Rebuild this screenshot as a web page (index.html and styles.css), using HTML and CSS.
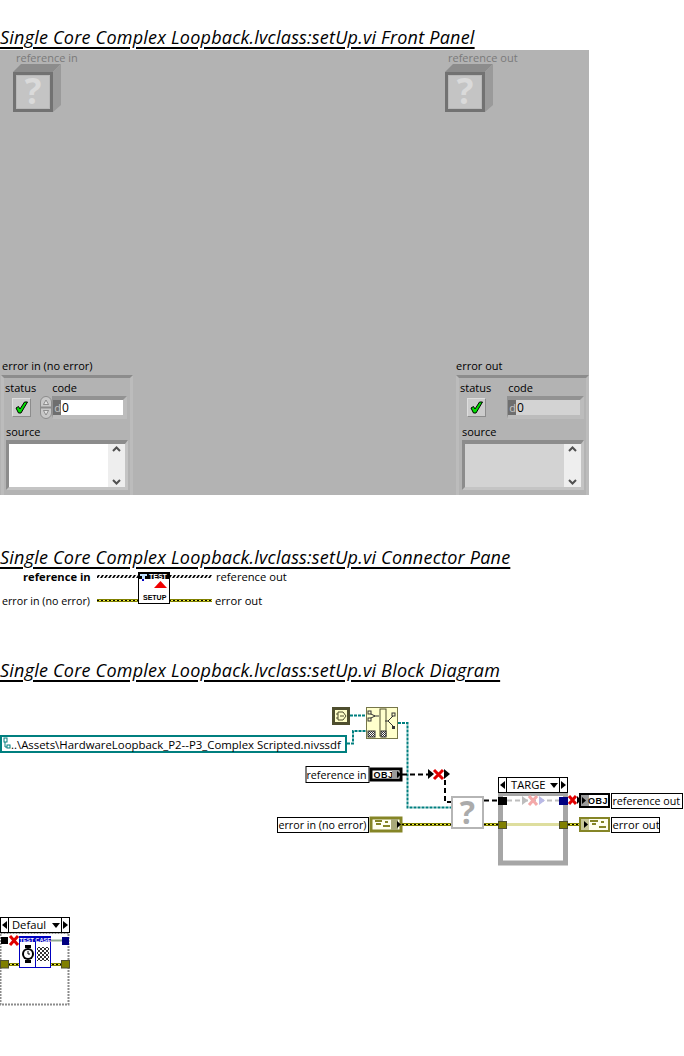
FILE: index.html
```html
<!DOCTYPE html>
<html>
<head>
    <title>setUp.vi</title>
    <link rel="stylesheet" href="styles.css">
</head>
<body>

<h2 class="title">Single Core Complex Loopback.lvclass:setUp.vi Front Panel</h2>

<div class="panel">
    <div class="refnum refnum-in">
        <div class="refnum-label">reference in</div>
        <svg width="48" height="52" viewBox="0 0 48 52">
            <polygon points="0,8 8,0 48,0 40,8" fill="#8c8c8c"/>
            <polygon points="40,8 48,0 48,41 40,48" fill="#9a9a9a"/>
            <rect x="0" y="8" width="40" height="40" fill="#727272"/>
            <rect x="3" y="11" width="34" height="34" fill="#b8b8b8"/>
            <rect x="4" y="12" width="32" height="32" fill="#c4c4c4"/>
            <text class="refnum-q" x="20" y="40">?</text>
        </svg>
    </div>
    <div class="refnum refnum-out">
        <div class="refnum-label">reference out</div>
        <svg width="48" height="52" viewBox="0 0 48 52">
            <polygon points="0,8 8,0 48,0 40,8" fill="#8c8c8c"/>
            <polygon points="40,8 48,0 48,41 40,48" fill="#9a9a9a"/>
            <rect x="0" y="8" width="40" height="40" fill="#727272"/>
            <rect x="3" y="11" width="34" height="34" fill="#b8b8b8"/>
            <rect x="4" y="12" width="32" height="32" fill="#c4c4c4"/>
            <text class="refnum-q" x="20" y="40">?</text>
        </svg>
    </div>

    <div class="cluster cluster-in">
        <div class="cluster-label">error in (no error)</div>
        <div class="cluster-box">
            <div class="field-labels">
                <span class="lbl-status">status</span>
                <span class="lbl-code">code</span>
            </div>
            <div class="field-row">
                <div class="check">
                    <svg width="13" height="13" viewBox="0 0 13 13"><path d="M1 7 L3.5 12 L6 12 L12.5 1 L9.5 1 L5 8 L3.5 5.5 Z" fill="#00e000" stroke="#000" stroke-width="1"/></svg>
                </div>
                <svg class="spinner" width="12" height="23" viewBox="0 0 12 23">
                    <rect x="0.5" y="0.5" width="11" height="22" rx="5.5" fill="#c8c8c8" stroke="#8c8c8c"/>
                    <rect x="1" y="10.5" width="10" height="2" fill="#8c8c8c"/>
                    <path d="M6 4 L3.5 8.5 H8.5 Z" fill="#e4e4e4" stroke="#6e6e6e" stroke-width="0.7"/>
                    <path d="M6 19 L3.5 14.5 H8.5 Z" fill="#e4e4e4" stroke="#6e6e6e" stroke-width="0.7"/>
                </svg>
                <div class="numeric"><span class="radix">d</span><span class="value">0</span></div>
            </div>
            <div class="lbl-source">source</div>
            <div class="textbox">
                <div class="text-area"></div>
                <div class="scroll">
                    <svg width="17" height="11" viewBox="0 0 17 11"><path d="M5 7 L8.5 3.5 L12 7" fill="none" stroke="#505050" stroke-width="2"/></svg>
                    <svg width="17" height="11" viewBox="0 0 17 11"><path d="M5 4 L8.5 7.5 L12 4" fill="none" stroke="#505050" stroke-width="2"/></svg>
                </div>
            </div>
        </div>
    </div>

    <div class="cluster cluster-out">
        <div class="cluster-label">error out</div>
        <div class="cluster-box">
            <div class="field-labels">
                <span class="lbl-status">status</span>
                <span class="lbl-code">code</span>
            </div>
            <div class="field-row">
                <div class="check">
                    <svg width="13" height="13" viewBox="0 0 13 13"><path d="M1 7 L3.5 12 L6 12 L12.5 1 L9.5 1 L5 8 L3.5 5.5 Z" fill="#00e000" stroke="#000" stroke-width="1"/></svg>
                </div>
                <div class="numeric"><span class="radix">d</span><span class="value">0</span></div>
            </div>
            <div class="lbl-source">source</div>
            <div class="textbox">
                <div class="text-area"></div>
                <div class="scroll">
                    <svg width="17" height="11" viewBox="0 0 17 11"><path d="M5 7 L8.5 3.5 L12 7" fill="none" stroke="#505050" stroke-width="2"/></svg>
                    <svg width="17" height="11" viewBox="0 0 17 11"><path d="M5 4 L8.5 7.5 L12 4" fill="none" stroke="#505050" stroke-width="2"/></svg>
                </div>
            </div>
        </div>
    </div>
</div>

<h2 class="title title-connector">Single Core Complex Loopback.lvclass:setUp.vi Connector Pane</h2>

<svg class="connector" width="300" height="40" viewBox="0 570 300 40">
    <defs>
        <pattern id="hatch" width="4" height="3" patternUnits="userSpaceOnUse" y="575">
            <rect width="4" height="3" fill="#fff"/>
            <path d="M0 3 L2 0 H4 L2 3 Z" fill="#000"/>
        </pattern>
    </defs>
    <text class="vi-text bold" x="23" y="581">reference in</text>
    <text class="vi-text" x="216" y="581">reference out</text>
    <text class="vi-text fit" x="2" y="605">error in (no error)</text>
    <text class="vi-text" x="215" y="605">error out</text>
    <rect x="97" y="575" width="115" height="3" fill="url(#hatch)"/>
    <line class="wire-err" x1="97" y1="600.5" x2="212" y2="600.5"/>
    <line class="wire-err-mid" x1="97" y1="600.5" x2="212" y2="600.5"/>
    <line class="wire-err-in" x1="97" y1="600.5" x2="212" y2="600.5"/>
    <rect x="138.5" y="572.5" width="31" height="31" fill="#fff" stroke="#000"/>
    <rect x="138" y="572" width="32" height="7" fill="#000"/>
    <text class="tiny-white" x="149" y="578.5">TEST</text>
    <rect x="140" y="574" width="7" height="2" fill="#bfe0ff"/>
    <rect x="142" y="576" width="3" height="3" fill="#bfe0ff"/>
    <rect x="142" y="579" width="2" height="2" fill="#0000c0"/>
    <polygon points="154,588 167,588 160.5,581" fill="#f00000"/>
    <text class="tiny-black" x="143" y="600">SETUP</text>
</svg>

<h2 class="title title-diagram">Single Core Complex Loopback.lvclass:setUp.vi Block Diagram</h2>

<svg class="diagram" width="684" height="330" viewBox="0 683 684 330">
    <defs>
        <pattern id="checker" width="2" height="2" patternUnits="userSpaceOnUse">
            <rect width="2" height="2" fill="#fff"/>
            <rect width="1" height="1" fill="#333"/>
            <rect x="1" y="1" width="1" height="1" fill="#333"/>
        </pattern>
        <pattern id="flag" width="4" height="4" patternUnits="userSpaceOnUse">
            <rect width="4" height="4" fill="#fff"/>
            <rect width="2" height="2" fill="#333"/>
            <rect x="2" y="2" width="2" height="2" fill="#333"/>
        </pattern>
    </defs>

    <!-- path wires -->
    <path class="wire-path" d="M350 715.5 H366"/>
    <path class="wire-path" d="M347 743.5 H353 V731 H366"/>
    <path class="wire-path" d="M398 723 H407.5 V807.5 H452"/>

    <!-- path constant -->
    <rect x="1" y="736" width="345" height="16" fill="#fff" stroke="#007f7f" stroke-width="2"/>
    <rect x="4" y="738" width="3" height="4" fill="none" stroke="#007f7f"/>
    <rect x="7" y="745" width="3" height="3" fill="none" stroke="#007f7f"/>
    <path d="M5 742 V747 H7" fill="none" stroke="#007f7f"/>
    <text class="vi-text path-text" x="11" y="749">..\Assets\HardwareLoopback_P2--P3_Complex Scripted.nivssdf</text>

    <!-- small constant -->
    <rect x="333.5" y="708.5" width="15" height="15" fill="#ffffc8" stroke="#4e4e2e" stroke-width="3"/>
    <path d="M338 712 H343 L346 716 L343 720 H338 Z" fill="none" stroke="#4e4e2e"/>
    <path d="M336 714 H338 M336 718 H338 M340 716 H344" stroke="#4e4e2e"/>

    <!-- path node -->
    <rect x="366.5" y="707.5" width="31" height="31" fill="#ffffcc" stroke="#76764a"/>
    <rect x="380" y="709" width="6" height="27" fill="#ffffcc" stroke="#4e4e2e"/>
    <path d="M369 713 L375 716 L369 719 M374 716 H379" fill="none" stroke="#333"/>
    <path d="M388 721 L393 716 M388 721 L393 726 M385 721 H388" fill="none" stroke="#333"/>
    <rect x="368" y="711" width="3" height="3" fill="#ffffcc" stroke="#333"/>
    <rect x="368" y="718" width="3" height="3" fill="#ffffcc" stroke="#333"/>
    <rect x="392" y="713" width="3" height="3" fill="#ffffcc" stroke="#333"/>
    <rect x="392" y="726" width="3" height="3" fill="#333"/>
    <rect x="368" y="731" width="7" height="6" fill="url(#checker)" stroke="#333"/>
    <rect x="381" y="731" width="5" height="6" fill="url(#checker)" stroke="#333"/>

    <!-- reference in -->
    <rect class="label-box" x="306" y="766.5" width="63" height="16"/>
    <text class="vi-text fit" x="306.5" y="779">reference in</text>
    <rect x="371" y="769" width="30" height="11" fill="#fff" stroke="#000" stroke-width="3"/>
    <text class="obj" x="373.5" y="778">OBJ</text>
    <rect x="392" y="770" width="7" height="9" fill="#9a9a9a"/>
    <polygon points="397,771 401,774.5 397,778" fill="#000"/>
    <path class="wire-ref-thick" d="M402 774.5 H428"/>
    <polygon points="428,769 434,774 428,779" fill="#000"/>
    <polygon points="444,769 450,774 444,779" fill="#000"/>
    <path class="x-mark" d="M434 770 L443 779 M443 770 L434 779"/>
    <path class="wire-ref-thick" d="M445 780 V802 H451"/>

    <!-- error in -->
    <rect class="label-box" x="277.5" y="817.5" width="91" height="15"/>
    <text class="vi-text fit" x="278.5" y="829">error in (no error)</text>
    <rect x="371" y="818" width="30" height="13" fill="#fffff0" stroke="#858526" stroke-width="3"/>
    <path d="M375 821 H382 M376 824 H381 M383 826 H390 M385 822 H388" stroke="#858526" stroke-width="2"/>
    <rect x="391" y="819" width="7" height="11" fill="#a8a87a"/>
    <polygon points="397,821 401,824.5 397,828" fill="#000"/>
    <line class="wire-err" x1="402" y1="824.5" x2="452" y2="824.5"/>
    <line class="wire-err-mid" x1="402" y1="824.5" x2="452" y2="824.5"/>
    <line class="wire-err-in" x1="402" y1="824.5" x2="452" y2="824.5"/>

    <!-- bad node -->
    <rect x="452" y="797" width="31" height="31" fill="#fff" stroke="#b5b5b5" stroke-width="2"/>
    <text class="node-q" x="467.5" y="824">?</text>

    <line class="wire-err" x1="484" y1="824.5" x2="498" y2="824.5"/>
    <line class="wire-err-mid" x1="484" y1="824.5" x2="498" y2="824.5"/>
    <line class="wire-err-in" x1="484" y1="824.5" x2="498" y2="824.5"/>
    <path class="wire-ref-thick" d="M484 800.5 H498"/>

    <!-- case structure -->
    <rect x="500.5" y="793.5" width="65" height="69.5" fill="#fff" stroke="#a6a6a6" stroke-width="5"/>
    <path class="wire-ref-faded" d="M507 800.5 H559"/>
    <polygon points="522,796 528,800.5 522,805" fill="#bdbdbd"/>
    <path d="M529 796 L537 805 M537 796 L529 805" stroke="#f4a9a9" stroke-width="3"/>
    <polygon points="539,796 545,800.5 539,805" fill="#b9b9e6"/>
    <line x1="507" y1="824.5" x2="559" y2="824.5" stroke="#dede9e" stroke-width="3"/>
    <rect x="498" y="797" width="9" height="8" fill="#000"/>
    <rect x="559" y="797" width="9" height="8" fill="#000080"/>
    <rect x="498.5" y="821.5" width="8" height="7" fill="#808000" stroke="#4e4e2e"/>
    <rect x="559.5" y="821.5" width="8" height="7" fill="#808000" stroke="#4e4e2e"/>
    <rect x="498.5" y="777.5" width="69" height="15" fill="#fff" stroke="#000"/>
    <path d="M506.5 778 V792 M559.5 778 V792" stroke="#000"/>
    <polygon points="505,781 505,789 500,785" fill="#000"/>
    <polygon points="561,781 561,789 566,785" fill="#000"/>
    <polygon points="550,783 558,783 554,788" fill="#000"/>
    <text class="vi-text" x="511" y="789">TARGE</text>

    <!-- outputs -->
    <path class="x-mark" d="M569 796 L576 804 M576 796 L569 804"/>
    <polygon points="577,796 581,800 577,804" fill="#000"/>
    <rect x="580" y="794" width="29" height="13" fill="#fff" stroke="#000" stroke-width="2"/>
    <rect x="581" y="795" width="8" height="11" fill="#9a9a9a"/>
    <polygon points="582,797 586,800.5 582,804" fill="#000"/>
    <text class="obj" x="588" y="804">OBJ</text>
    <rect class="label-box" x="611.5" y="793.5" width="71" height="15"/>
    <text class="vi-text fit" x="612.5" y="805">reference out</text>

    <line class="wire-err" x1="568" y1="824.5" x2="580" y2="824.5"/>
    <line class="wire-err-mid" x1="568" y1="824.5" x2="580" y2="824.5"/>
    <line class="wire-err-in" x1="568" y1="824.5" x2="580" y2="824.5"/>
    <rect x="580" y="818" width="29" height="13" fill="#fffff0" stroke="#858526" stroke-width="2"/>
    <rect x="581" y="819" width="8" height="11" fill="#c9c99a"/>
    <polygon points="584,821 588,824.5 584,828" fill="#000"/>
    <path d="M590 821 H598 M592 824 H596 M599 827 H606 M601 822 H604" stroke="#858526" stroke-width="2"/>
    <rect class="label-box" x="611.5" y="817.5" width="48" height="15"/>
    <text class="vi-text" x="612.5" y="829">error out</text>

    <!-- default case -->
    <rect class="case-dotted" x="0.5" y="933" width="68" height="71.5" fill="#fff"/>
    <line x1="51" y1="940.5" x2="62" y2="940.5" stroke="#8fa88f" stroke-width="2"/>
    <line class="wire-err" x1="8" y1="964.5" x2="62" y2="964.5"/>
    <line class="wire-err-mid" x1="8" y1="964.5" x2="62" y2="964.5"/>
    <line class="wire-err-in" x1="8" y1="964.5" x2="62" y2="964.5"/>
    <rect x="1" y="937" width="7" height="7" fill="#000"/>
    <rect x="62" y="937" width="7" height="8" fill="#000080"/>
    <rect x="0.5" y="960.5" width="8" height="7.5" fill="#808000" stroke="#4e4e2e"/>
    <rect x="61.5" y="960.5" width="8" height="7.5" fill="#808000" stroke="#4e4e2e"/>
    <rect x="19.5" y="936.5" width="31" height="31" fill="#fff" stroke="#0000c0"/>
    <rect x="19" y="936" width="32" height="6" fill="#0000c0"/>
    <text class="tiny-case" x="19.5" y="941.8">TEST CASE</text>
    <path class="x-mark" d="M10 936 L18 945 M18 936 L10 945"/>
    <circle cx="28" cy="954" r="6" fill="#000"/>
    <circle cx="28" cy="954" r="4" fill="#fff"/>
    <path d="M28 951 V954 H30" fill="none" stroke="#000"/>
    <rect x="25" y="945" width="6" height="3" fill="#000"/>
    <rect x="25" y="960" width="6" height="3" fill="#000"/>
    <line x1="35.5" y1="942" x2="35.5" y2="967" stroke="#0000c0"/>
    <rect x="37" y="947" width="12" height="14" fill="url(#flag)"/>
    <rect x="0.5" y="917.5" width="69" height="15" fill="#fff" stroke="#000"/>
    <path d="M8.5 918 V932 M61.5 918 V932" stroke="#000"/>
    <polygon points="7,921 7,929 2,925" fill="#000"/>
    <polygon points="63,921 63,929 68,925" fill="#000"/>
    <polygon points="52,923 60,923 56,928" fill="#000"/>
    <text class="vi-text" x="12" y="929">Defaul</text>
</svg>

</body>
</html>
```

FILE: styles.css
```css
body {
    margin: 0;
    padding-top: 26px;
    background-color: #fff;
    font-family: "Open Sans", "Noto Sans", sans-serif;
}
.title {
    margin: 0;
    height: 24px;
    font-size: 18px;
    line-height: 22px;
    font-weight: 400;
    font-style: italic;
    letter-spacing: 0.22px;
    color: #000;
    white-space: nowrap;
    text-decoration: underline;
    text-decoration-thickness: 2px;
    text-underline-offset: 3px;
}
.title-connector {
    margin-top: 51px;
}
.title-diagram {
    margin-top: 49px;
}
svg {
    display: block;
}

/* front panel */
.panel {
    position: relative;
    width: 589px;
    height: 445px;
    background-color: #b3b3b3;
    overflow: hidden;
    font-size: 11px;
}
.refnum {
    position: absolute;
    top: 2px;
}
.refnum-in {
    left: 13px;
}
.refnum-out {
    left: 445px;
}
.refnum-label {
    height: 12px;
    margin-left: 3px;
    line-height: 12px;
    color: #7a7a7a;
    white-space: nowrap;
}
.refnum-q {
    font-size: 35px;
    font-weight: 700;
    fill: #dadada;
    text-anchor: middle;
}
.cluster {
    position: absolute;
    top: 309px;
}
.cluster-in {
    left: 1px;
    width: 132px;
}
.cluster-out {
    left: 456px;
    width: 133px;
}
.cluster-label {
    height: 16px;
    padding-left: 1px;
    line-height: 13px;
    color: #000;
    white-space: nowrap;
}
.cluster-out .cluster-label {
    padding-left: 0;
}
.cluster-box {
    box-sizing: border-box;
    height: 120px;
    padding: 3px 2px 0 2px;
    border-top: 3px solid #8c8c8c;
    border-left: 3px solid #bcbcbc;
    border-right: 3px solid #bcbcbc;
    color: #000;
}
.cluster-out .cluster-box {
    padding-left: 3px;
}
.field-labels {
    display: flex;
    height: 17px;
    line-height: 14px;
}
.lbl-status {
    margin-left: -1px;
}
.cluster-out .lbl-status {
    margin-left: -2px;
}
.lbl-code {
    margin-left: 16px;
}
.cluster-out .lbl-code {
    margin-left: 17px;
}
.field-row {
    display: flex;
    align-items: center;
    height: 23px;
    margin-top: -2px;
}
.check {
    display: flex;
    align-items: center;
    justify-content: center;
    box-sizing: border-box;
    width: 19px;
    height: 19px;
    margin-left: 6px;
    background-color: #cccccc;
    border-top: 1px solid #dedede;
    border-left: 1px solid #dedede;
    border-right: 1px solid #8c8c8c;
    border-bottom: 1px solid #8c8c8c;
}
.cluster-out .check {
    margin-left: 5px;
}
.spinner {
    margin-left: 9px;
}
.numeric {
    display: flex;
    box-sizing: border-box;
    width: 75px;
    height: 23px;
    border: 4px solid #929292;
    border-right-color: #bcbcbc;
    border-bottom-color: #bcbcbc;
    border-left-width: 1px;
}
.cluster-out .numeric {
    margin-left: 21px;
    width: 77px;
    background-color: #d3d3d3;
}
.radix {
    width: 8px;
    background-color: #6e6e6e;
    color: #c4c4c4;
    line-height: 15px;
    text-align: right;
}
.value {
    flex: 1;
    padding-left: 1px;
    background-color: #fff;
    color: #000;
    line-height: 16px;
    font-size: 12px;
}
.cluster-out .value {
    background-color: #d3d3d3;
}
.lbl-source {
    height: 15px;
    margin-top: 6px;
    line-height: 14px;
}
.textbox {
    display: flex;
    box-sizing: border-box;
    width: 122px;
    height: 50px;
    border: 3px solid #8c8c8c;
    border-top-width: 4px;
    border-right-color: #c4c4c4;
    border-bottom-color: #c4c4c4;
}
.text-area {
    flex: 1;
    background-color: #fff;
}
.cluster-out .text-area {
    background-color: #d3d3d3;
}
.scroll {
    display: flex;
    flex-direction: column;
    justify-content: space-between;
    width: 17px;
    background-color: #eeeeee;
}

/* connector pane and block diagram */
.vi-text {
    font-size: 11.2px;
    fill: #000;
}
.fit {
    font-size: 10.7px;
}
.path-text {
    font-size: 11.4px;
}
.bold {
    font-weight: 700;
}
.tiny-white {
    font-family: "Liberation Sans", sans-serif;
    font-size: 7px;
    font-weight: 700;
    fill: #fff;
}
.tiny-case {
    font-family: "Liberation Sans", sans-serif;
    font-size: 5.6px;
    font-weight: 700;
    fill: #fff;
}
.tiny-black {
    font-family: "Liberation Sans", sans-serif;
    font-size: 7px;
    font-weight: 700;
    fill: #000;
}
.obj {
    font-family: "Liberation Sans", sans-serif;
    font-size: 9px;
    font-weight: 700;
    letter-spacing: 0.5px;
    fill: #000;
}
.node-q {
    font-size: 32px;
    font-weight: 700;
    fill: #ababab;
    text-anchor: middle;
}
.label-box {
    fill: #fff;
    stroke: #000;
}
.wire-ref-thick {
    stroke: #000;
    stroke-width: 2;
    stroke-dasharray: 5 3;
    fill: none;
}
.wire-ref-faded {
    stroke: #bdbdbd;
    stroke-width: 2;
    stroke-dasharray: 5 3;
    fill: none;
}
.wire-err {
    stroke: #808000;
    stroke-width: 3;
}
.wire-err-mid {
    stroke: #f0f040;
    stroke-width: 1;
}
.wire-err-in {
    stroke: #000;
    stroke-width: 1;
    stroke-dasharray: 2 2;
}
.wire-path {
    stroke: #007f7f;
    stroke-width: 2;
    stroke-dasharray: 3 1;
    fill: none;
}
.x-mark {
    stroke: #e00000;
    stroke-width: 3;
    fill: none;
}
.case-dotted {
    stroke: #8c8c8c;
    stroke-width: 2;
    stroke-dasharray: 2 1;
}
```
